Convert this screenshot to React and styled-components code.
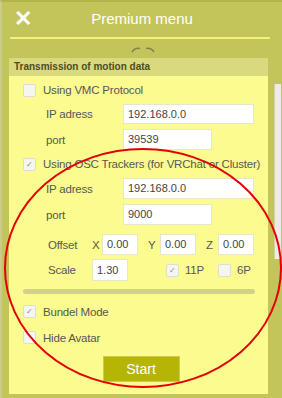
import React from "react";
import styled, { createGlobalStyle } from "styled-components";

const GlobalStyle = createGlobalStyle`
  body {
    margin: 0;
    background: #c3c55a;
    font-family: "Liberation Sans", Arial, sans-serif;
  }
`;

const Screen = styled.div`
  position: relative;
  width: 282px;
  height: 398px;
  overflow: hidden;
  box-sizing: border-box;
  background: #c3c55a;
  border-top: 2px solid #b2b449;
  border-left: 2px solid #cbcc8a;
`;

const Header = styled.div`
  position: relative;
  height: 34px;
  display: flex;
  align-items: center;
  justify-content: center;
`;

const Close = styled.span`
  position: absolute;
  left: 12px;
  top: 6px;
  color: #fff;
  font-size: 22px;
  font-weight: bold;
  line-height: 22px;
`;

const Title = styled.div`
  color: #fff;
  font-size: 15px;
  margin-top: -1px;
`;

const Divider = styled.div`
  height: 2px;
  margin: 1px 12px 0 8px;
  background: #f3f37c;
`;

const Handle = styled.div`
  display: flex;
  justify-content: center;
  padding: 7px 0 3px 2px;
  height: 9px;
`;

const Body = styled.div`
  display: flex;
  padding-left: 7px;
`;

const Panel = styled.div`
  width: 259px;
  height: 336px;
  background: #fbfb8f;
`;

const PanelHead = styled.div`
  height: 18px;
  line-height: 18px;
  padding-left: 5px;
  background: #d9da7d;
  color: #4d4d22;
  font-size: 10px;
  font-weight: bold;
`;

const Content = styled.div`
  padding: 7px 0 0 14px;
`;

const Scroll = styled.div`
  width: 6px;
  height: 175px;
  margin: 26px 0 0 6px;
  background: #ecece4;
  border-left: 1px solid #d2d2b0;
`;

const Row = styled.div`
  display: flex;
  align-items: center;
  height: ${(p) => p.h || 20}px;
  margin-top: ${(p) => p.mt || 0}px;
  padding-left: ${(p) => p.indent || 0}px;
  color: #575757;
  font-size: 11.5px;
  letter-spacing: -0.2px;
  white-space: nowrap;
`;

const Box = styled.span`
  width: 13px;
  height: 13px;
  box-sizing: border-box;
  flex: none;
  border: 1px solid #deded0;
  border-radius: 2px;
  background: #f6f6f0;
  color: #888;
  font-size: 8px;
  line-height: 12px;
  text-align: center;
  margin-right: ${(p) => p.gap || 7}px;
  margin-left: ${(p) => p.ml || 0}px;
`;

const Label = styled.span`
  width: ${(p) => p.w}px;
  flex: none;
`;

const Input = styled.div`
  width: ${(p) => p.w}px;
  height: ${(p) => p.h || 20}px;
  box-sizing: border-box;
  flex: none;
  background: #fff;
  border: 1px solid #e6e6c8;
  padding-left: 4px;
  line-height: ${(p) => (p.h || 20) - 2}px;
  color: #444;
  font-size: 11px;
  letter-spacing: 0;
`;

const Axis = styled.span`
  width: ${(p) => p.w}px;
  margin-left: ${(p) => p.ml || 0}px;
  flex: none;
`;

const Slider = styled.div`
  width: 232px;
  height: 5px;
  border-radius: 3px;
  background: #d1d18a;
  margin-top: 8px;
`;

const StartWrap = styled.div`
  display: flex;
  justify-content: center;
  margin: 11px 0 0 -14px;
  padding-left: 5px;
`;

const Start = styled.button`
  width: 77px;
  height: 26px;
  border: 1px solid #cccb55;
  background: #b6b405;
  color: #fff;
  font-family: inherit;
  font-size: 14px;
  padding: 0;
`;

const Annotation = styled.svg`
  position: absolute;
  left: 0;
  top: 0;
  pointer-events: none;
`;

const Check = ({ on, ...rest }) => <Box {...rest}>{on ? "✓" : ""}</Box>;

export default function App() {
  return (
    <>
      <GlobalStyle />
      <Screen>
        <Header>
          <Close>✕</Close>
          <Title>Premium menu</Title>
        </Header>
        <Divider />
        <Handle>
          <svg width="24" height="8" viewBox="0 0 24 8">
            <path d="M1 6 Q4 1.5 9 2.5" stroke="#7f8155" strokeWidth="1.4" fill="none" />
            <path d="M15 2.5 Q20 1.5 23 6" stroke="#7f8155" strokeWidth="1.4" fill="none" />
          </svg>
        </Handle>
        <Body>
          <Panel>
            <PanelHead>Transmission of motion data</PanelHead>
            <Content>
              <Row h={14}>
                <Check />
                Using VMC Protocol
              </Row>
              <Row mt={7} indent={23}>
                <Label w={77}>IP adress</Label>
                <Input w={131}>192.168.0.0</Input>
              </Row>
              <Row mt={5} h={21} indent={23}>
                <Label w={77}>port</Label>
                <Input w={89} h={21}>39539</Input>
              </Row>
              <Row mt={5} h={18}>
                <Check on />
                Using OSC Trackers (for VRChat or Cluster)
              </Row>
              <Row mt={5} h={21} indent={23}>
                <Label w={77}>IP adress</Label>
                <Input w={131} h={21}>192.168.0.0</Input>
              </Row>
              <Row mt={5} h={21} indent={23}>
                <Label w={77}>port</Label>
                <Input w={89} h={21}>9000</Input>
              </Row>
              <Row mt={9} h={21} indent={25}>
                <Label w={44}>Offset</Label>
                <Axis w={10}>X</Axis>
                <Input w={36} h={21}>0.00</Input>
                <Axis w={12} ml={10}>Y</Axis>
                <Input w={36} h={21}>0.00</Input>
                <Axis w={12} ml={10}>Z</Axis>
                <Input w={36} h={21}>0.00</Input>
              </Row>
              <Row mt={4} h={22} indent={25}>
                <Label w={44}>Scale</Label>
                <Input w={36} h={22}>1.30</Input>
                <Check on ml={38} gap={6} />
                <Label w={33}>11P</Label>
                <Check gap={6} />
                6P
              </Row>
              <Slider />
              <Row mt={10} h={15}>
                <Check on />
                Bundel Mode
              </Row>
              <Row mt={11} h={15}>
                <Check />
                Hide Avatar
              </Row>
              <StartWrap>
                <Start>Start</Start>
              </StartWrap>
            </Content>
          </Panel>
          <Scroll />
        </Body>
        <Annotation width="282" height="398">
          <ellipse cx="141" cy="266" rx="138" ry="119" stroke="#e30000" strokeWidth="2" fill="none" />
        </Annotation>
      </Screen>
    </>
  );
}
